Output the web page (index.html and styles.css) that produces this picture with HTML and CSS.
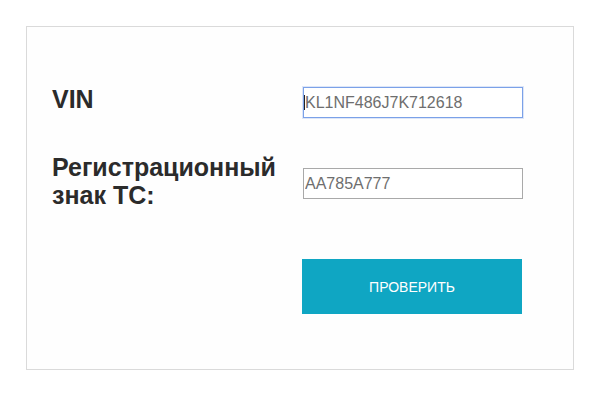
FILE: index.html
```html
<!DOCTYPE html>
<html lang="ru">
<head>
<meta charset="utf-8">
<title>Проверка</title>
<link rel="stylesheet" href="styles.css">
</head>
<body>
<form class="card">
  <div class="row row-vin">
    <label class="label" for="vin">VIN</label>
    <div class="field field-vin">
      <input id="vin" class="input input-focus" type="text" value="KL1NF486J7K712618">
      <span class="caret"></span>
    </div>
  </div>
  <div class="row row-reg">
    <label class="label" for="reg">Регистрационный знак ТС:</label>
    <div class="field field-reg">
      <input id="reg" class="input" type="text" value="AA785A777">
    </div>
  </div>
  <div class="row row-btn">
    <span></span>
    <button type="button" class="btn">Проверить</button>
  </div>
</form>
</body>
</html>
```
FILE: styles.css
```css
html, body {
  margin: 0;
  padding: 0;
  background: #ffffff;
}
body {
  padding: 26px;
  font-family: "Liberation Sans", Arial, sans-serif;
}
.card {
  box-sizing: border-box;
  width: 548px;
  height: 344px;
  border: 1px solid #dadada;
  background: #fefefe;
  padding: 58px 0 0 25px;
}
.row {
  display: grid;
  grid-template-columns: 251px 220px;
  align-items: start;
}
.row-reg {
  margin-top: 35px;
}
.row-btn {
  margin-top: 50px;
}
.label {
  font-size: 25px;
  font-weight: bold;
  line-height: 28px;
  color: #2b2b2b;
  width: 230px;
}
.field {
  position: relative;
}
.field-vin {
  margin-top: 2px;
}
.field-reg {
  margin-top: 15px;
}
.input {
  box-sizing: border-box;
  display: block;
  width: 220px;
  height: 31px;
  margin: 0;
  padding: 0 0 0 1px;
  border: 1px solid #a9a9a9;
  background: #ffffff;
  font-family: "Liberation Sans", Arial, sans-serif;
  font-size: 16px;
  color: #6e6e6e;
  outline: none;
}
.input-focus {
  border-color: #7ba1e8;
  box-shadow: 0 0 0 1px rgba(123, 161, 232, 0.25);
}
.caret {
  position: absolute;
  left: 1px;
  top: 8px;
  width: 1px;
  height: 15px;
  background: #222;
}
.btn {
  width: 220px;
  height: 55px;
  margin: 0 0 0 -1px;
  border: none;
  background: #0fa6c3;
  color: #ffffff;
  font-family: "Liberation Sans", Arial, sans-serif;
  font-size: 14px;
  text-transform: uppercase;
  cursor: pointer;
}
```
